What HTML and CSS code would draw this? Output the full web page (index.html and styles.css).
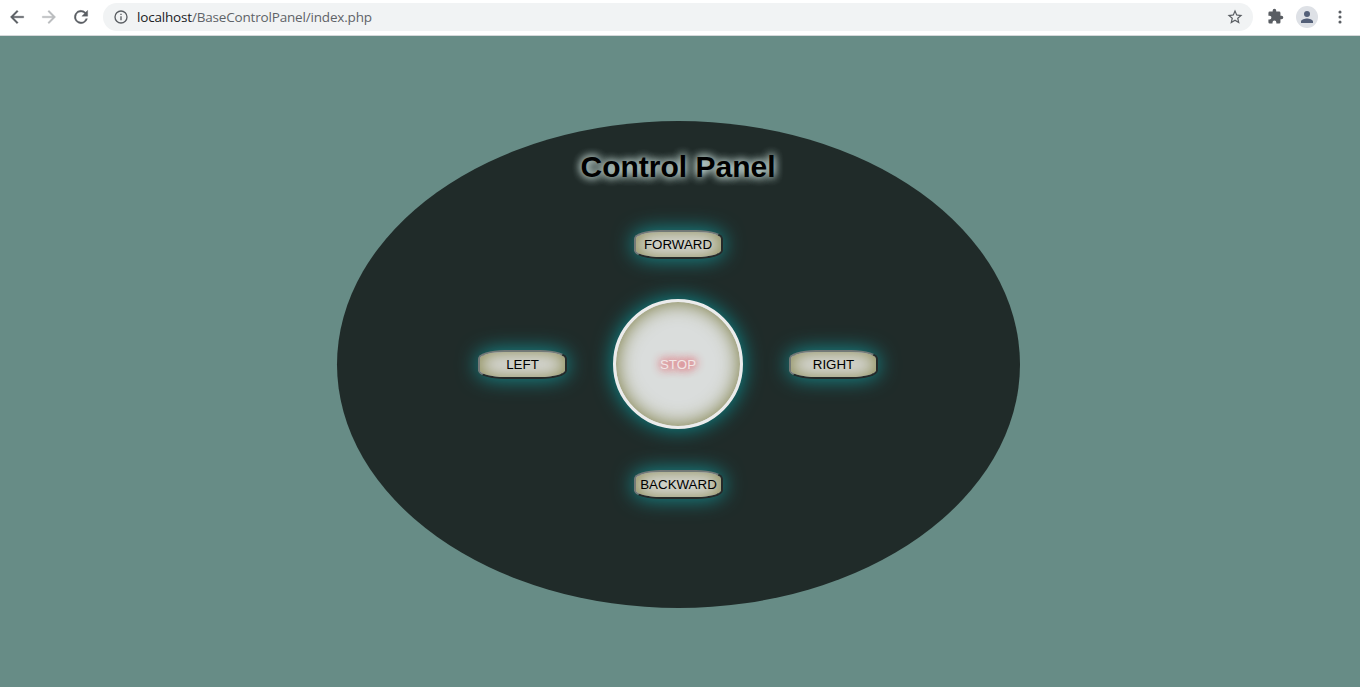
FILE: index.html
```html
<!DOCTYPE html>
<html lang="en">
<head>
<meta charset="utf-8">
<title>Control Panel</title>
<link rel="stylesheet" href="styles.css">
</head>
<body>
<header class="toolbar">
  <svg class="nav" viewBox="0 0 24 24"><path d="M20 11H7.8l5.6-5.6L12 4l-8 8 8 8 1.4-1.4L7.8 13H20z"/></svg>
  <svg class="nav nav-off" viewBox="0 0 24 24"><path d="M12 4l-1.4 1.4 5.6 5.6H4v2h12.200l-5.600 5.600L12 20l8-8z"/></svg>
  <svg class="nav" viewBox="0 0 24 24"><path d="M17.650 6.350A8 8 0 1 0 19.730 14h-2.080A6 6 0 1 1 12 6c1.660 0 3.140.69 4.220 1.780L13 11h7V4z"/></svg>
  <div class="address">
    <svg class="info" viewBox="0 0 24 24"><path d="M11 7h2v2h-2zm0 4h2v6h-2zm1-9a10 10 0 1 0 0 20 10 10 0 0 0 0-20zm0 18a8 8 0 1 1 0-16 8 8 0 0 1 0 16z"/></svg>
    <span class="url"><span class="host">localhost</span>/BaseControlPanel/index.php</span>
    <svg class="star" viewBox="0 0 24 24"><path d="M22 9.240l-7.190-.62L12 2 9.190 8.630 2 9.240l5.460 4.730L5.820 21 12 17.270 18.180 21l-1.630-7.030zM12 15.400l-3.760 2.270 1-4.280-3.320-2.880 4.380-.38L12 6.100l1.710 4.040 4.380.38-3.320 2.880 1 4.280z"/></svg>
  </div>
  <svg class="puzzle" viewBox="0 0 24 24"><path d="M20.500 11H19V7a2 2 0 0 0-2-2h-4V3.500a2.500 2.500 0 0 0-5 0V5H4a2 2 0 0 0-2 2v3.800h1.500a2.700 2.700 0 0 1 0 5.400H2V20a2 2 0 0 0 2 2h3.800v-1.500a2.700 2.700 0 0 1 5.400 0V22H17a2 2 0 0 0 2-2v-4h1.500a2.500 2.500 0 0 0 0-5z"/></svg>
  <span class="avatar"><svg viewBox="0 0 24 24"><path d="M12 12a4 4 0 1 0 0-8 4 4 0 0 0 0 8zm0 2c-2.670 0-8 1.340-8 4v2h16v-2c0-2.660-5.330-4-8-4z"/></svg></span>
  <svg class="more" viewBox="0 0 24 24"><circle cx="12" cy="4.500" r="2.300"/><circle cx="12" cy="12" r="2.300"/><circle cx="12" cy="19.500" r="2.300"/></svg>
</header>
<main class="page">
  <section class="panel">
    <h1 class="title">Control Panel</h1>
    <div class="controls">
      <button class="key forward">FORWARD</button>
      <button class="key left">LEFT</button>
      <button class="stop">STOP</button>
      <button class="key right">RIGHT</button>
      <button class="key backward">BACKWARD</button>
    </div>
  </section>
</main>
</body>
</html>
```
FILE: styles.css
```css
* { box-sizing: border-box; }
body {
  margin: 0;
  height: 687px;
  overflow: hidden;
  display: flex;
  flex-direction: column;
  background: #678c86;
  font-family: "Liberation Sans", Arial, sans-serif;
}
.toolbar {
  flex: none;
  height: 36px;
  display: flex;
  align-items: center;
  padding: 0 11px 2px 7px;
  background: #fff;
  border-bottom: 1px solid #d5d8da;
}
.toolbar svg { flex: none; fill: #5a5e63; }
.toolbar .nav { width: 20px; height: 20px; margin-right: 12px; stroke: #5a5e63; stroke-width: 0.4; }
.toolbar .nav-off { fill: #babcbe; stroke: #babcbe; }
.address {
  width: 1150px;
  height: 28px;
  display: flex;
  align-items: center;
  padding: 0 9px 0 10px;
  border-radius: 14px;
  background: #f1f3f4;
}
.info { width: 16px; height: 16px; margin-right: 8px; }
.url {
  flex: 1;
  font: 13.500px/20px "Open Sans", "Noto Sans", sans-serif;
  letter-spacing: -0.18px;
  color: #5f6368;
}
.host { color: #202124; }
.star { width: 18px; height: 18px; }
.puzzle { width: 17px; height: 17px; margin-left: 14px; }
.avatar {
  width: 22px;
  height: 22px;
  margin-left: 12px;
  display: flex;
  align-items: center;
  justify-content: center;
  border-radius: 50%;
  background: #dee1e6;
}
.avatar svg { width: 18px; height: 18px; fill: #546078; }
.more { width: 16px; height: 16px; margin-left: 14px; }
.page {
  flex: 1;
  padding: 85px 0 0 336.500px;
}
.panel {
  width: 683px;
  height: 487px;
  padding-top: 28px;
  border-radius: 50%;
  background: #202b29;
}
.title {
  margin: 0;
  font-size: 30px;
  line-height: 35px;
  text-align: center;
  color: #000;
  text-shadow: 0 0 10px #d5eae5, 0 0 9px #d5eae5;
}
.controls {
  width: 400px;
  margin: 45px auto 0;
  display: grid;
  grid-template: 30px 130px 30px / 90px 130px 90px;
  grid-template-areas: ". forward ." "left stop right" ". backward .";
  row-gap: 40px;
  justify-content: space-between;
  align-items: center;
  justify-items: center;
}
.key {
  width: 89px;
  height: 29px;
  margin-top: 1px;
  padding: 0 0 1px;
  border: 2px solid;
  border-color: #737977 #252a29 #252a29 #737977;
  border-radius: 30%;
  background: #dcdddd;
  box-shadow: 0 0 20px 1px #15888b, inset 0 0 18px #85854b;
  font: 13.333px "Liberation Sans", Arial, sans-serif;
  color: #000;
  white-space: nowrap;
}
.stop {
  grid-area: stop;
  width: 130px;
  height: 130px;
  padding: 0;
  border: 3px solid #ececec;
  border-radius: 50%;
  background: #dadddc;
  box-shadow: 0 0 20px 1px #0c888b, inset 0 0 20px #78783c;
  font: 13.333px "Liberation Sans", Arial, sans-serif;
  color: #f2e6e6;
  text-shadow: 0 0 10px #e43b48, 0 0 9px #e43b48;
}
.forward { grid-area: forward; }
.left { grid-area: left; justify-self: start; }
.right { grid-area: right; justify-self: end; }
.backward { grid-area: backward; padding-left: 1px; }
```
